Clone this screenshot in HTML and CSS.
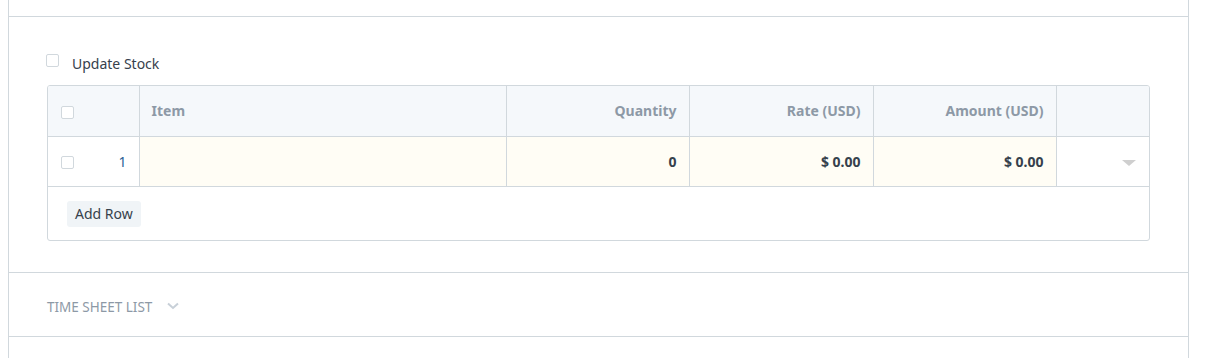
FILE: index.html
```html
<!DOCTYPE html>
<html>
<head>
	<meta charset="UTF-8">
	<title>Items</title>
	<link rel="stylesheet" href="styles.css">
</head>
<body>
	<div class="layout-main">
		<div class="form-section top-section"></div>

		<div class="form-section items-section">
			<label class="check-row">
				<span class="checkbox"></span>
				<span>Update Stock</span>
			</label>

			<div class="grid">
				<table class="grid-table">
					<colgroup>
						<col class="col-idx">
						<col class="col-item">
						<col class="col-qty">
						<col class="col-rate">
						<col class="col-amount">
						<col class="col-edit">
					</colgroup>
					<tr class="grid-heading">
						<td class="idx-cell"><span class="checkbox"></span></td>
						<td>Item</td>
						<td class="text-right">Quantity</td>
						<td class="text-right">Rate (USD)</td>
						<td class="text-right">Amount (USD)</td>
						<td></td>
					</tr>
					<tr class="grid-row">
						<td class="idx-cell"><span class="checkbox"></span><span class="row-index">1</span></td>
						<td class="editable"></td>
						<td class="editable text-right">0</td>
						<td class="editable text-right">$ 0.00</td>
						<td class="editable text-right">$ 0.00</td>
						<td class="edit-cell"><span class="caret"></span></td>
					</tr>
				</table>
				<div class="grid-footer">
					<button class="btn-add">Add Row</button>
				</div>
			</div>
		</div>

		<div class="form-section collapsed-section">
			<span class="section-head">Time Sheet List</span>
			<svg class="chevron" width="12" height="8" viewBox="0 0 12 8">
				<path d="M1 1.5 L6 6 L11 1.5" fill="none" stroke="#c8d0d8" stroke-width="2"/>
			</svg>
		</div>

		<div class="form-section last-section"></div>
	</div>
</body>
</html>
```
FILE: styles.css
```css
:root {
	--border: #d1d8dd;
	--text: #36414c;
	--muted: #8d99a6;
	--head-bg: #f5f8fb;
	--edit-bg: #fffdf5;
}
body {
	margin: 0 0 0 8px;
	font-family: "Noto Sans", "Open Sans", sans-serif;
	font-size: 14px;
	color: var(--text);
	background: #fff;
}
.layout-main {
	width: 1179px;
	border-left: 1px solid var(--border);
	border-right: 1px solid var(--border);
	min-height: 358px;
}
.form-section {
	border-bottom: 1px solid var(--border);
	padding: 0 38px;
}
.top-section {
	height: 16px;
}
.items-section {
	padding-top: 37px;
	padding-bottom: 31px;
}
.check-row {
	display: flex;
	align-items: center;
	gap: 13px;
	height: 18px;
	margin-bottom: 13px;
}
.checkbox {
	display: inline-block;
	width: 11px;
	height: 11px;
	border: 1px solid var(--border);
	border-radius: 2px;
	background: #fff;
	box-sizing: content-box;
}
.check-row .checkbox {
	margin-top: -6px;
	margin-left: -1px;
}

/* grid */
.grid {
	border: 1px solid var(--border);
	border-radius: 3px;
	overflow: hidden;
}
.grid-table {
	width: 100%;
	border-collapse: collapse;
	table-layout: fixed;
}
.col-idx { width: 91px; }
.col-item { width: 367px; }
.col-qty { width: 183px; }
.col-rate { width: 184px; }
.col-amount { width: 183px; }
.col-edit { width: auto; }

.grid-table td {
	padding: 0 12px;
	border-left: 1px solid var(--border);
	border-bottom: 1px solid var(--border);
	box-sizing: border-box;
	vertical-align: middle;
}
.grid-table td:first-child {
	border-left: none;
}
.grid-heading td {
	background: var(--head-bg);
	color: var(--muted);
	font-weight: bold;
	height: 50px;
}
.grid-row td {
	height: 50px;
	font-weight: bold;
}
.grid-row td.editable {
	background: var(--edit-bg);
}
.text-right {
	text-align: right;
}
.idx-cell {
	padding-left: 13px !important;
	padding-right: 12px !important;
}
.idx-cell .checkbox {
	vertical-align: middle;
}
.row-index {
	float: right;
	font-weight: normal;
	color: #2b5f94;
}
.edit-cell {
	text-align: right;
	padding-right: 13px !important;
}
.caret {
	display: inline-block;
	width: 0;
	height: 0;
	border-left: 7px solid transparent;
	border-right: 7px solid transparent;
	border-top: 6px solid #cfcfcf;
	vertical-align: middle;
}

.grid-footer {
	padding: 14px 19px 13px;
}
.btn-add {
	font-family: inherit;
	font-size: 14px;
	color: var(--text);
	background: #f0f4f7;
	border: none;
	border-radius: 3px;
	height: 26px;
	padding: 0 8px;
}

.collapsed-section {
	height: 63px;
	display: flex;
	align-items: center;
	gap: 15px;
}
.section-head {
	text-transform: uppercase;
	font-size: 13.5px;
	color: var(--muted);
	margin-top: 5px;
}
.chevron {
	margin-top: 3px;
}
.last-section {
	border-bottom: none;
	height: 40px;
}
```
